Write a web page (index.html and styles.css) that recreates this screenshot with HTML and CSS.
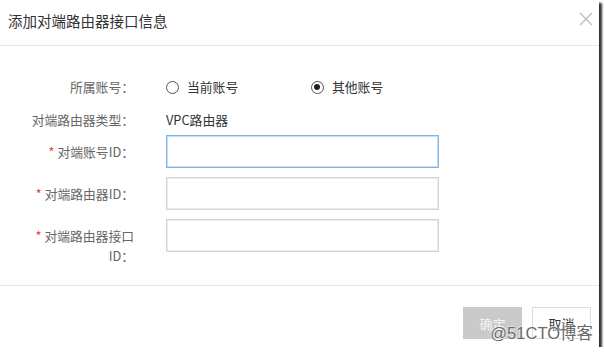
FILE: index.html
```html
<!DOCTYPE html>
<html lang="zh-CN">
<head>
    <meta charset="UTF-8">
    <title>添加对端路由器接口信息</title>
    <link rel="stylesheet" href="styles.css">
</head>
<body>

<div class="dialog">
    <!-- Header -->
    <div class="dialog-header">
        <span class="dialog-title">添加对端路由器接口信息</span>
        <svg class="close" width="14" height="14" viewBox="0 0 14 14">
            <path d="M1 1 L13 13 M13 1 L1 13" stroke="#bdbdbd" stroke-width="1.4" fill="none"/>
        </svg>
    </div>

    <!-- Form -->
    <div class="dialog-body">
        <div class="row row-radio">
            <label class="label">所属账号：</label>
            <div class="radios">
                <span class="radio"><i class="dot"></i>当前账号</span>
                <span class="radio checked"><i class="dot"></i>其他账号</span>
            </div>
        </div>
        <div class="row row-text">
            <label class="label">对端路由器类型：</label>
            <span class="value">VPC路由器</span>
        </div>
        <div class="row row-input">
            <label class="label"><span class="req">*</span> 对端账号ID：</label>
            <div class="input focused"></div>
        </div>
        <div class="row row-input">
            <label class="label"><span class="req">*</span> 对端路由器ID：</label>
            <div class="input"></div>
        </div>
        <div class="row row-input">
            <label class="label"><span class="req">*</span> 对端路由器接口ID：</label>
            <div class="input"></div>
        </div>
    </div>

    <!-- Footer buttons -->
    <div class="dialog-footer">
        <button class="btn btn-ok">确定</button>
        <button class="btn btn-cancel">取消</button>
    </div>

    <span class="watermark">@51CTO博客</span>
</div>

</body>
</html>
```

FILE: styles.css
```css
body {
    margin: 0;
    background: #ffffff;
    font-family: "Noto Sans CJK SC", "Noto Sans", sans-serif;
    overflow: hidden;
}
.dialog {
    position: relative;
    width: 599px;
    height: 347px;
    background: #ffffff;
    box-shadow: 3px 3px 2px 0 #333333;
}
.dialog-header {
    height: 45px;
    display: flex;
    align-items: center;
    justify-content: space-between;
    padding: 0 6px 0 8px;
    border-bottom: 1px solid #e6e6e6;
}
.dialog-title {
    font-size: 14.5px;
    color: #333333;
    margin-top: -4px;
}
.close {
    margin-top: -7px;
}
.dialog-body {
    height: 208px;
    padding: 31px 0 0 29px;
    font-size: 12.8px;
}
.row {
    display: flex;
    align-items: flex-start;
}
.label {
    width: 105px;
    margin-right: 32px;
    text-align: right;
    color: #666666;
    line-height: 20px;
}
.row-radio {
    height: 20px;
}
.row-text {
    margin-top: 13px;
    height: 20px;
}
.row-input {
    margin-top: 9px;
}
.row-text + .row-input {
    margin-top: 5px;
}
.row-input .label {
    padding-top: 7px;
}
.req {
    color: #e4393c;
}
.value {
    color: #333333;
    line-height: 20px;
}
.radios {
    display: flex;
    line-height: 20px;
    color: #333333;
}
.radio {
    display: flex;
    align-items: center;
    width: 145px;
}
.dot {
    box-sizing: border-box;
    width: 13px;
    height: 13px;
    border: 1.5px solid #555555;
    border-radius: 50%;
    margin-right: 8px;
    position: relative;
}
.checked .dot::after {
    content: "";
    position: absolute;
    left: 2px;
    top: 2px;
    width: 6px;
    height: 6px;
    border-radius: 50%;
    background: #222222;
}
.input {
    box-sizing: border-box;
    width: 273px;
    height: 33px;
    border: 1px solid #d4d4d4;
    box-shadow: inset 0 0 0 1px #ececec;
}
.input.focused {
    border-color: #7fb5e6;
    box-shadow: inset 0 0 0 1px #c6def4;
}
.dialog-footer {
    border-top: 1px solid #e6e6e6;
    padding: 21px 8px 0 0;
    display: flex;
    justify-content: flex-end;
    gap: 10px;
}
.btn {
    width: 59px;
    height: 32px;
    font-family: inherit;
    font-size: 13px;
    border-radius: 0;
}
.btn-ok {
    background: #cacaca;
    border: 1px solid #cacaca;
    color: #f4f4f4;
}
.btn-cancel {
    background: #ffffff;
    border: 1px solid #dddddd;
    color: #333333;
}
.watermark {
    position: absolute;
    right: 6px;
    bottom: 3px;
    font-family: "Liberation Sans", "Noto Sans CJK SC", sans-serif;
    font-size: 16.5px;
    color: #6a6a6a;
    text-shadow: 0 0 2px #ffffff, 0 0 2px #ffffff;
}
```
